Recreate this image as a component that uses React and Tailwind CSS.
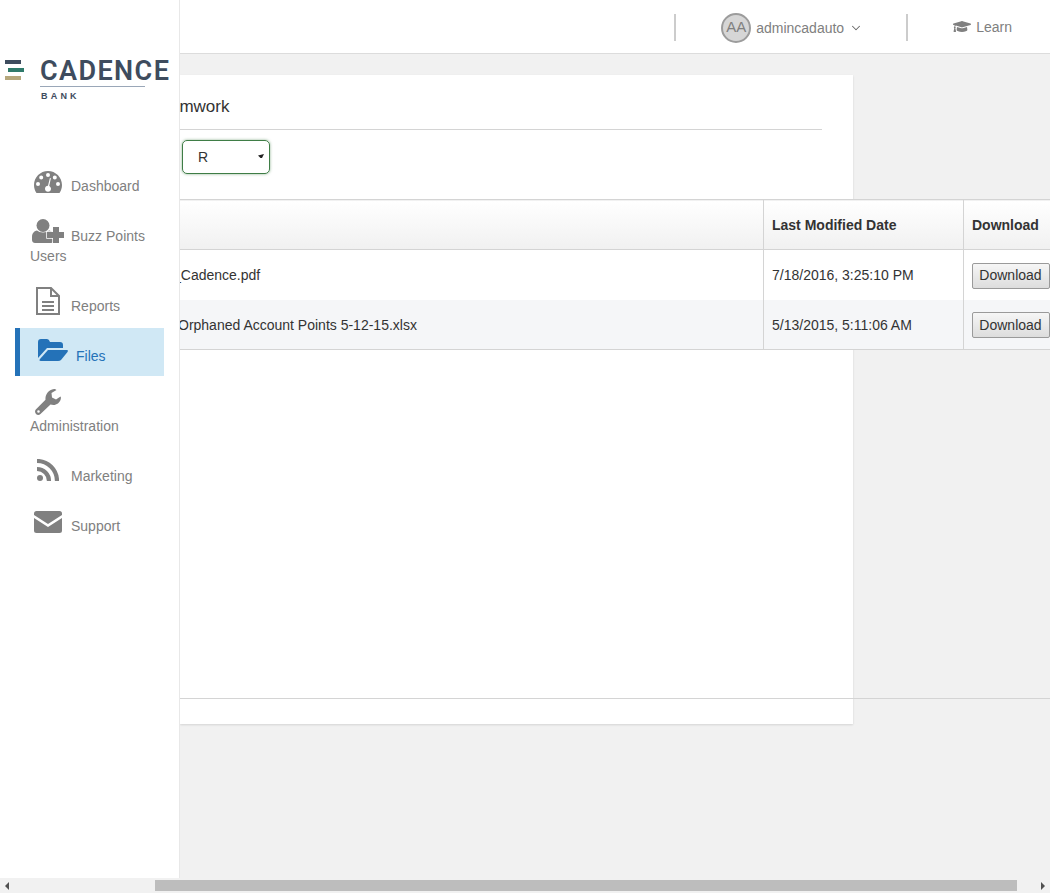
import React from 'react';
import { FaGraduationCap } from 'react-icons/fa';
import { LuChevronDown } from 'react-icons/lu';

const Gauge = ({ className }) => (
  <svg viewBox="0 0 28 22" className={className} fill="currentColor">
    <path
      fillRule="evenodd"
      d="M14 0C6.3 0 0 6.3 0 14c0 3 .9 5.8 2.5 8h23c1.6-2.2 2.5-5 2.5-8C28 6.3 21.7 0 14 0zM14 2a2 2 0 1 1 0 4 2 2 0 0 1 0-4zM7.2 4.6a2 2 0 1 1 0 4 2 2 0 0 1 0-4zM20.8 4.6a2 2 0 1 1 0 4 2 2 0 0 1 0-4zM4 11a2 2 0 1 1 0 4 2 2 0 0 1 0-4zM24 11a2 2 0 1 1 0 4 2 2 0 0 1 0-4zM15.9 7l1 .3-1.7 7.6c1 .5 1.8 1.6 1.8 2.8 0 1.7-1.3 3-3 3s-3-1.3-3-3 1.3-3 3-3l1.9-7.7z"
    />
  </svg>
);

const UserPlus = ({ className }) => (
  <svg viewBox="0 0 32 25" className={className} fill="currentColor">
    <circle cx="11" cy="6.5" r="6.5" />
    <path d="M0 21v-3c0-3.500 2-6 5-6.500 1.500 1.300 3.500 2 6 2s4.500-.7 6-2c3 .5 5 3 5 6.500v3c0 2-1.500 3-3 3H3c-1.500 0-3-1-3-3z" />
    <path
      d="M21 8h6v5h5v6h-5v5h-6v-5h-6v-6h6z"
      stroke="#ffffff"
      strokeWidth="1.500"
      paintOrder="stroke"
    />
  </svg>
);

const FileText = ({ className }) => (
  <svg viewBox="0 0 24 28" className={className} fill="none" stroke="currentColor" strokeWidth="2">
    <path d="M1 1h14l8 8v18H1z" />
    <path d="M15 1v8h8" />
    <path d="M6 15h12M6 19h12M6 23h12" />
  </svg>
);

const FolderOpen = ({ className }) => (
  <svg viewBox="0 0 30 22" className={className} fill="currentColor">
    <path d="M0 3Q0 0 3 0h6q2 0 3 3h10q3 0 3 3v3H9L0 19z" />
    <path d="M10 11h19q1.500 0 .5 2L23 21q-1 1-3 1H3q-2.500 0-1-2z" />
  </svg>
);

const Wrench = ({ className }) => (
  <svg viewBox="0 0 26 26" className={className} fill="currentColor">
    <path
      fillRule="evenodd"
      d="M.8 20.500l9.700-9.700C10 6 13 1 19 0c1 0 2 .5 2.500 1l-5 3 .5 4.500 4 2 4.500-3c.5.5.5 1.500.3 2.500-1.300 5-5.800 7-10.300 5.500l-10 9.500c-1.500 1.500-3.500 1-4.500 0s-1.500-3-.2-4.500zM3.500 21.200a1.300 1.300 0 1 0 0 2.600 1.300 1.300 0 0 0 0-2.600z"
    />
  </svg>
);

const Rss = ({ className }) => (
  <svg viewBox="0 0 22 22" className={className} fill="none" stroke="currentColor" strokeWidth="4.200">
    <circle cx="3" cy="19" r="3" fill="currentColor" stroke="none" />
    <path d="M0 2a20 20 0 0 1 20 20" />
    <path d="M0 10a12 12 0 0 1 12 12" />
  </svg>
);

const Envelope = ({ className }) => (
  <svg viewBox="0 0 28 22" className={className} fill="currentColor">
    <path d="M2.500 0h23Q28 0 28 2.500V4L14 13 0 4V2.500Q0 0 2.500 0z" />
    <path d="M0 7l14 9 14-9v12.500Q28 22 25.500 22h-23Q0 22 0 19.500z" />
  </svg>
);

const navItems = [
  { label: 'Dashboard', icon: Gauge, box: 'w-[41px] pl-[4px] pb-[3px]', size: 'w-[28px] h-[22px] shrink-0' },
  { label: 'Buzz Points Users', icon: UserPlus, box: 'w-[41px] pl-[2px] pb-[2px]', size: 'w-[32px] h-[25px] shrink-0' },
  { label: 'Reports', icon: FileText, box: 'w-[41px] pl-[6px] pb-[1px]', size: 'w-[24px] h-[28px] shrink-0' },
  { label: 'Files', icon: FolderOpen, box: 'w-[46px] pl-[8px] pb-[5px]', size: 'w-[30px] h-[22px] shrink-0', active: true },
  { label: 'Administration', icon: Wrench, box: 'w-[41px] pl-[5px] pb-[1px]', size: 'w-[26px] h-[26px] shrink-0' },
  { label: 'Marketing', icon: Rss, box: 'w-[41px] pl-[7px] pb-[5px]', size: 'w-[22px] h-[22px] shrink-0' },
  { label: 'Support', icon: Envelope, box: 'w-[41px] pl-[4px] pb-[3px]', size: 'w-[28px] h-[22px] shrink-0' },
];

const files = [
  { name: '_Cadence.pdf', shift: '-ml-[7px]', date: '7/18/2016, 3:25:10 PM' },
  { name: 'Orphaned Account Points 5-12-15.xlsx', shift: '-ml-[2px]', date: '5/13/2015, 5:11:06 AM', alt: true },
];

function Logo() {
  return (
    <div className="flex h-[158px] pt-[60px] pl-[5px]">
      <div className="flex flex-col w-[19px] gap-[4px] shrink-0">
        <div className="h-[4px] w-[16px] bg-[#3e4c5e]" />
        <div className="h-[4px] w-[16px] ml-[3px] bg-[#2f7a6b]" />
        <div className="h-[4px] w-[16px] bg-[#b5a77c]" />
      </div>
      <div className="ml-[16px]">
        <div className="text-[27px] leading-[20px] mt-px font-semibold tracking-[1.4px] text-[#3e4c5e] font-['Roboto',sans-serif]">CADENCE</div>
        <div className="h-px w-[105px] mt-[5px] bg-[#9aa7b8]" />
        <div className="text-[9px] leading-[8px] mt-[5px] ml-px font-bold tracking-[3.2px] text-[#3e4c5e]">BANK</div>
      </div>
    </div>
  );
}

function Sidebar() {
  return (
    <aside className="w-[180px] shrink-0 bg-white border-r border-[#e8e8e8]">
      <Logo />
      <nav className="flex flex-col gap-[2px] pl-[15px] w-[164px]">
        {navItems.map((item) => {
          const Icon = item.icon;
          return (
            <a
              key={item.label}
              className={`block border-l-[5px] pl-[10px] pr-[10px] pt-[18px] pb-[10px] text-[14px] leading-[20px] ${
                item.active ? 'border-[#2472b8] bg-[#d0e8f5] text-[#2472b8]' : 'border-transparent text-[#808080]'
              }`}
            >
              <span className={`inline-flex h-5 items-end align-top ${item.box}`}>
                <Icon className={item.size} />
              </span>
              {item.label}
            </a>
          );
        })}
      </nav>
    </aside>
  );
}

function TopBar() {
  return (
    <header className="flex h-[54px] shrink-0 items-center justify-end bg-white border-b border-[#dcdcdc] text-[14px] text-[#808080] pr-[38px]">
      <div className="w-[2px] h-[27px] mt-[1px] bg-[#cccccc]" />
      <div className="flex items-center ml-[45px] w-[185px]">
        <div className="flex items-center justify-center w-[30px] h-[30px] rounded-full bg-[#d6d6d6] border-2 border-[#9c9c9c] text-[15px] mt-[2px]">AA</div>
        <span className="ml-[5px] mt-[3px]">admincadauto</span>
        <LuChevronDown strokeWidth={1.75} className="w-[14px] h-[14px] ml-[5px] mt-[3px] text-[#666666]" />
      </div>
      <div className="w-[2px] h-[27px] mt-[1px] bg-[#cccccc]" />
      <div className="flex items-center ml-[45px]">
        <FaGraduationCap className="w-[18px] h-[15px]" />
        <span className="ml-[5px] mt-[2px]">Learn</span>
      </div>
    </header>
  );
}

function FilesTable() {
  return (
    <table className="w-[870px] table-fixed border-collapse text-[14px] text-[#333333]">
      <colgroup>
        <col className="w-[583px]" />
        <col className="w-[200px]" />
        <col className="w-[87px]" />
      </colgroup>
      <thead>
        <tr className="h-[50px] bg-gradient-to-b from-white to-[#f1f1f1] border-y border-[#d4d4d4] text-left font-bold">
          <th className="p-0" />
          <th className="pl-[8.5px] pt-[2px] border-l border-[#d4d4d4]">Last Modified Date</th>
          <th className="pl-[8.5px] pt-[2px] border-l border-[#d4d4d4] whitespace-nowrap">Download</th>
        </tr>
      </thead>
      <tbody>
        {files.map((file) => (
          <tr key={file.name} className={`h-[50px] ${file.alt ? 'bg-[#f5f6f8] border-b border-[#d4d4d4]' : 'bg-white'}`}>
            <td className="p-0 pt-[2px] whitespace-nowrap">
              <div className={file.shift}>{file.name}</div>
            </td>
            <td className="pl-[8.5px] pt-[2px] border-l border-[#d4d4d4] whitespace-nowrap">{file.date}</td>
            <td className="pl-[8px] pt-[2px] pr-0 border-l border-[#d4d4d4]">
              <button className="block w-[78px] h-[26px] rounded-[2px] border border-[#9a9a9a] bg-gradient-to-b from-[#f6f6f6] to-[#dddddd] text-[14px] text-[#333333]">
                Download
              </button>
            </td>
          </tr>
        ))}
      </tbody>
    </table>
  );
}

function Card() {
  return (
    <section className="w-[673px] h-[649px] mt-[21px] bg-white shadow-[0_1px_2px_rgba(0,0,0,0.12)]">
      <div className="mr-[31px] pt-[20px] pb-[10px] border-b border-[#d4d4d4]">
        <h2 className="-ml-[28px] text-[17px] leading-[24px] font-normal text-[#333333]">Teamwork</h2>
      </div>
      <div className="relative flex items-center w-[88px] h-[34px] mt-[10px] ml-[2px] pl-[15px] rounded-[5px] border border-[#3f7d46] shadow-[0_0_3px_rgba(63,125,70,0.6)] text-[14px] text-[#333333]">
        R
        <svg viewBox="0 0 6 4" className="absolute right-[5px] top-[13px] w-[6px] h-[4px]" fill="#222222">
          <path d="M0 1.500 L6 0 L4 4 L2.500 4 Z" />
        </svg>
      </div>
      <div className="mt-[25px]">
        <FilesTable />
      </div>
      <div className="w-[870px] mt-[348px] border-t border-[#d4d4d4]" />
    </section>
  );
}

function ScrollBar() {
  return (
    <div className="flex items-center h-[15px] shrink-0 bg-[#f1f1f1] pl-[5px] pr-[5px]">
      <svg viewBox="0 0 4 8" className="w-[4px] h-[8px]" fill="#505050">
        <path d="M4 0 V8 L0 4 Z" />
      </svg>
      <div className="w-[862px] h-[11px] ml-[146px] bg-[#bdbdbd]" />
      <svg viewBox="0 0 4 8" className="w-[4px] h-[8px] ml-auto" fill="#505050">
        <path d="M0 0 V8 L4 4 Z" />
      </svg>
    </div>
  );
}

export default function App() {
  return (
    <div className="flex flex-col w-[1050px] h-[893px] overflow-hidden bg-[#f1f1f1] font-['Liberation_Sans',Arial,sans-serif]">
      <div className="flex flex-1 min-h-0">
        <Sidebar />
        <main className="flex flex-col flex-1 min-w-0 overflow-hidden">
          <TopBar />
          <Card />
        </main>
      </div>
      <ScrollBar />
    </div>
  );
}
